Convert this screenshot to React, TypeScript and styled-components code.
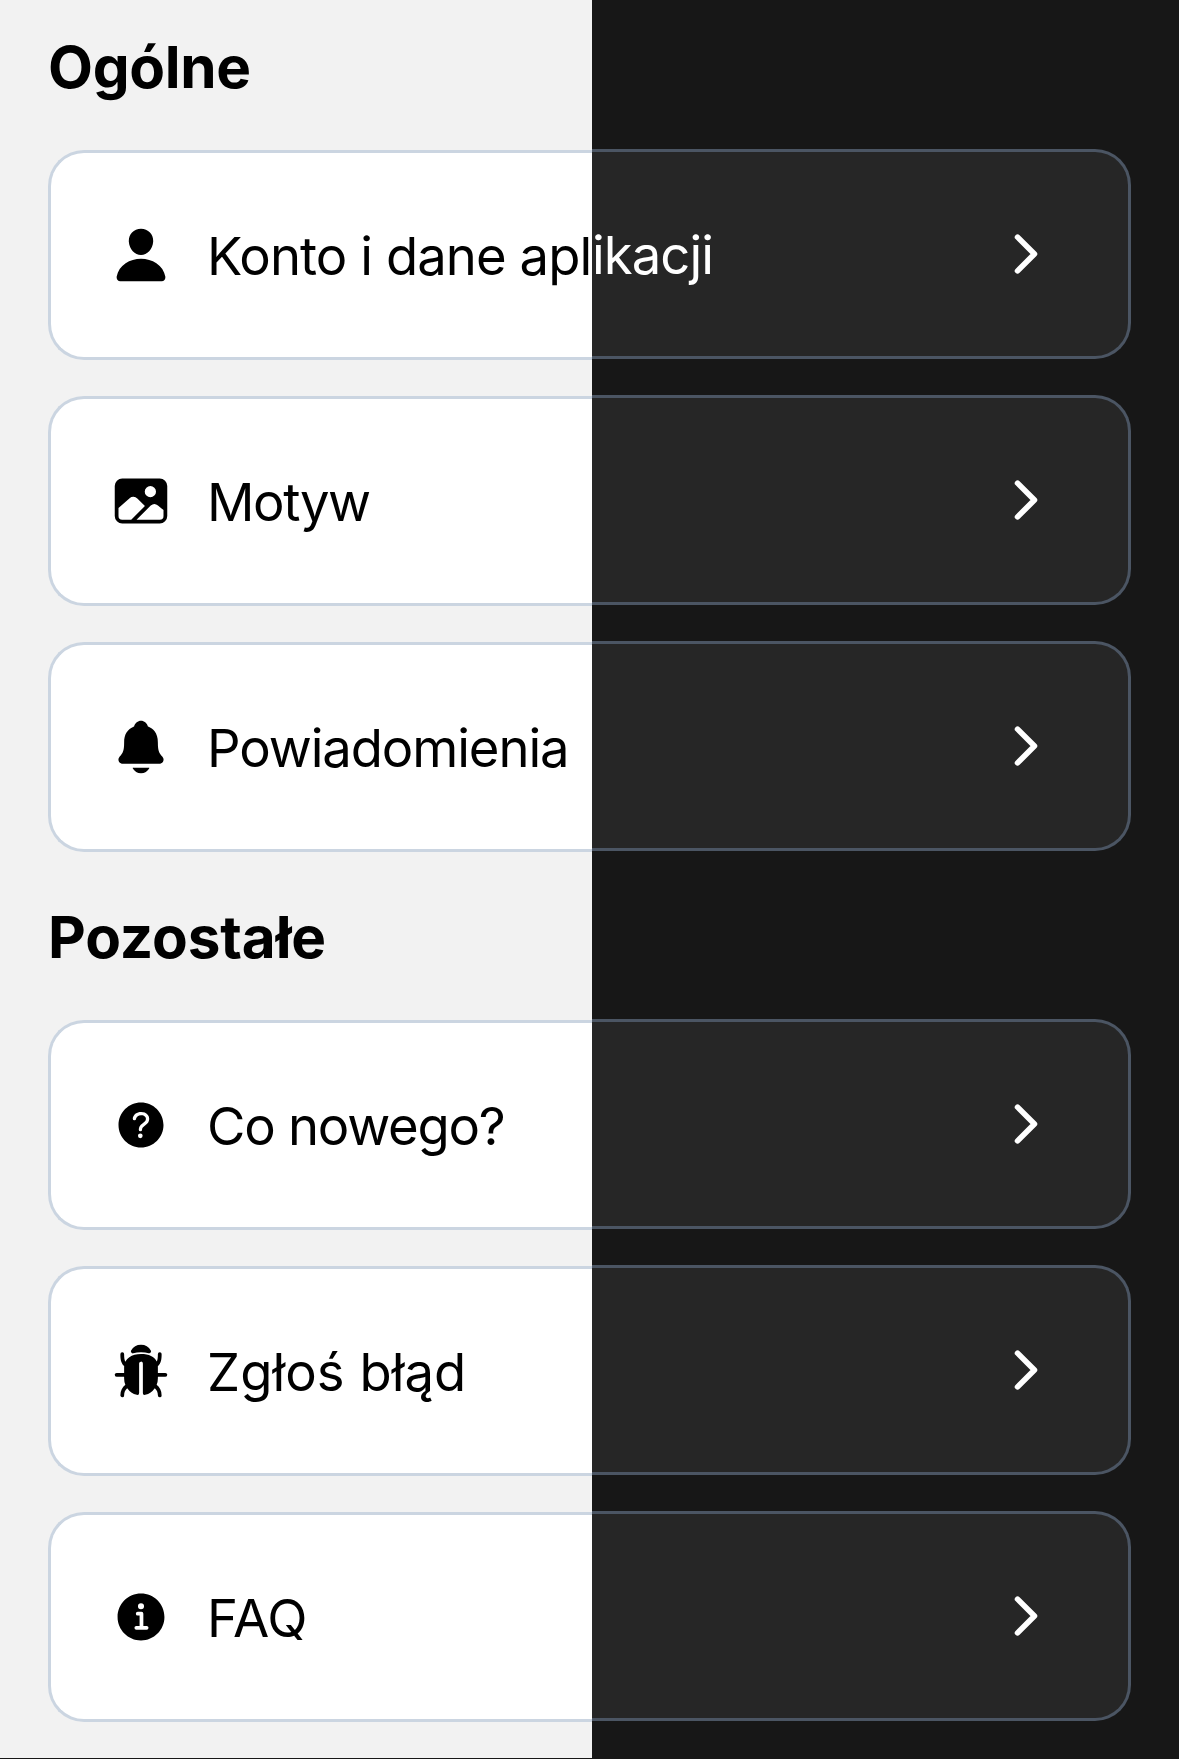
import React from "react";
import styled, { createGlobalStyle, ThemeProvider } from "styled-components";
import type { IconType } from "react-icons";
import {
  IoBug,
  IoChevronForward,
  IoHelpCircle,
  IoImage,
  IoInformationCircle,
  IoNotifications,
  IoPerson,
} from "react-icons/io5";

const light = { page: "#f2f2f2", card: "#ffffff", border: "#cbd5e1", text: "#000000" };
const dark = { page: "#171717", card: "#262626", border: "#4b5563", text: "#ffffff" };

const GlobalStyle = createGlobalStyle`
  *, *::before, *::after { box-sizing: border-box; }
  body { margin: 0; background: #171717; }
`;

const Screen = styled.main`
  display: flex;
  width: 1179px;
  height: 1759px;
  overflow: hidden;
  font-family: Inter, "Liberation Sans", sans-serif;
`;

const LightPane = styled.section`
  width: 592px;
  height: 1758px;
  flex: none;
  background: ${(p) => p.theme.page};
`;

const DarkPane = styled.section`
  flex: 1;
  min-width: 0;
  background: ${(p) => p.theme.page};
`;

const Group = styled.div<{ $height: number }>`
  display: flex;
  flex-direction: column;
  justify-content: flex-end;
  height: ${(p) => p.$height}px;
`;

const Heading = styled.h2<{ $tracking: number }>`
  margin: 0 0 41px 48px;
  font-size: 58.4px;
  line-height: 84px;
  font-weight: 700;
  letter-spacing: ${(p) => p.$tracking}px;
  color: ${(p) => p.theme.text};
`;

const List = styled.div`
  display: flex;
  flex-direction: column;
  gap: 36px;
`;

const StartCard = styled.div`
  display: flex;
  align-items: center;
  gap: 36px;
  height: 210px;
  margin-left: 48px;
  padding-left: 60px;
  border: 3px solid ${(p) => p.theme.border};
  border-right: 0;
  border-radius: 36px 0 0 36px;
  background: ${(p) => p.theme.card};
  color: ${(p) => p.theme.text};
`;

const EndCard = styled.div`
  display: flex;
  align-items: center;
  height: 210px;
  margin-right: 48px;
  padding-right: 72px;
  border: 3px solid ${(p) => p.theme.border};
  border-left: 0;
  border-radius: 0 36px 36px 0;
  background: ${(p) => p.theme.card};
  color: ${(p) => p.theme.text};
`;

const Label = styled.span<{ $tracking: number }>`
  padding-top: 2px;
  font-size: 52.6px;
  line-height: 72px;
  letter-spacing: ${(p) => p.$tracking}px;
  white-space: nowrap;
`;

const Chevron = styled(IoChevronForward)`
  flex: none;
  margin-left: auto;
`;

const IconBox = styled.span`
  display: flex;
  flex: none;
  width: 60px;
  height: 60px;
`;

type Item = { label: string; rest?: string; tracking: number; icon: IconType };

const general: Item[] = [
  { label: "Konto i dane apl", rest: "ikacji", tracking: -0.93, icon: IoPerson },
  { label: "Motyw", tracking: -1.45, icon: IoImage },
  { label: "Powiadomienia", tracking: -1.1, icon: IoNotifications },
];

const other: Item[] = [
  { label: "Co nowego?", tracking: -1.25, icon: IoHelpCircle },
  { label: "Zgłoś błąd", tracking: 0.05, icon: IoBug },
  { label: "FAQ", tracking: -0.2, icon: IoInformationCircle },
];

function StartList({ items }: { items: Item[] }) {
  return (
    <List>
      {items.map(({ label, tracking, icon: Icon }) => (
        <StartCard key={label}>
          <IconBox>
            <Icon size={60} />
          </IconBox>
          <Label $tracking={tracking}>{label}</Label>
        </StartCard>
      ))}
    </List>
  );
}

function EndList({ items }: { items: Item[] }) {
  return (
    <List>
      {items.map(({ label, rest, tracking }) => (
        <EndCard key={label}>
          {rest && <Label $tracking={tracking}>{rest}</Label>}
          <Chevron size={60} />
        </EndCard>
      ))}
    </List>
  );
}

export default function App() {
  return (
    <>
      <GlobalStyle />
      <Screen>
        <ThemeProvider theme={light}>
          <LightPane>
            <Group $height={150}>
              <Heading $tracking={-0.3}>Ogólne</Heading>
            </Group>
            <StartList items={general} />
            <Group $height={168}>
              <Heading $tracking={-0.1}>Pozostałe</Heading>
            </Group>
            <StartList items={other} />
          </LightPane>
        </ThemeProvider>
        <ThemeProvider theme={dark}>
          <DarkPane>
            <Group $height={149} />
            <EndList items={general} />
            <Group $height={168} />
            <EndList items={other} />
          </DarkPane>
        </ThemeProvider>
      </Screen>
    </>
  );
}
